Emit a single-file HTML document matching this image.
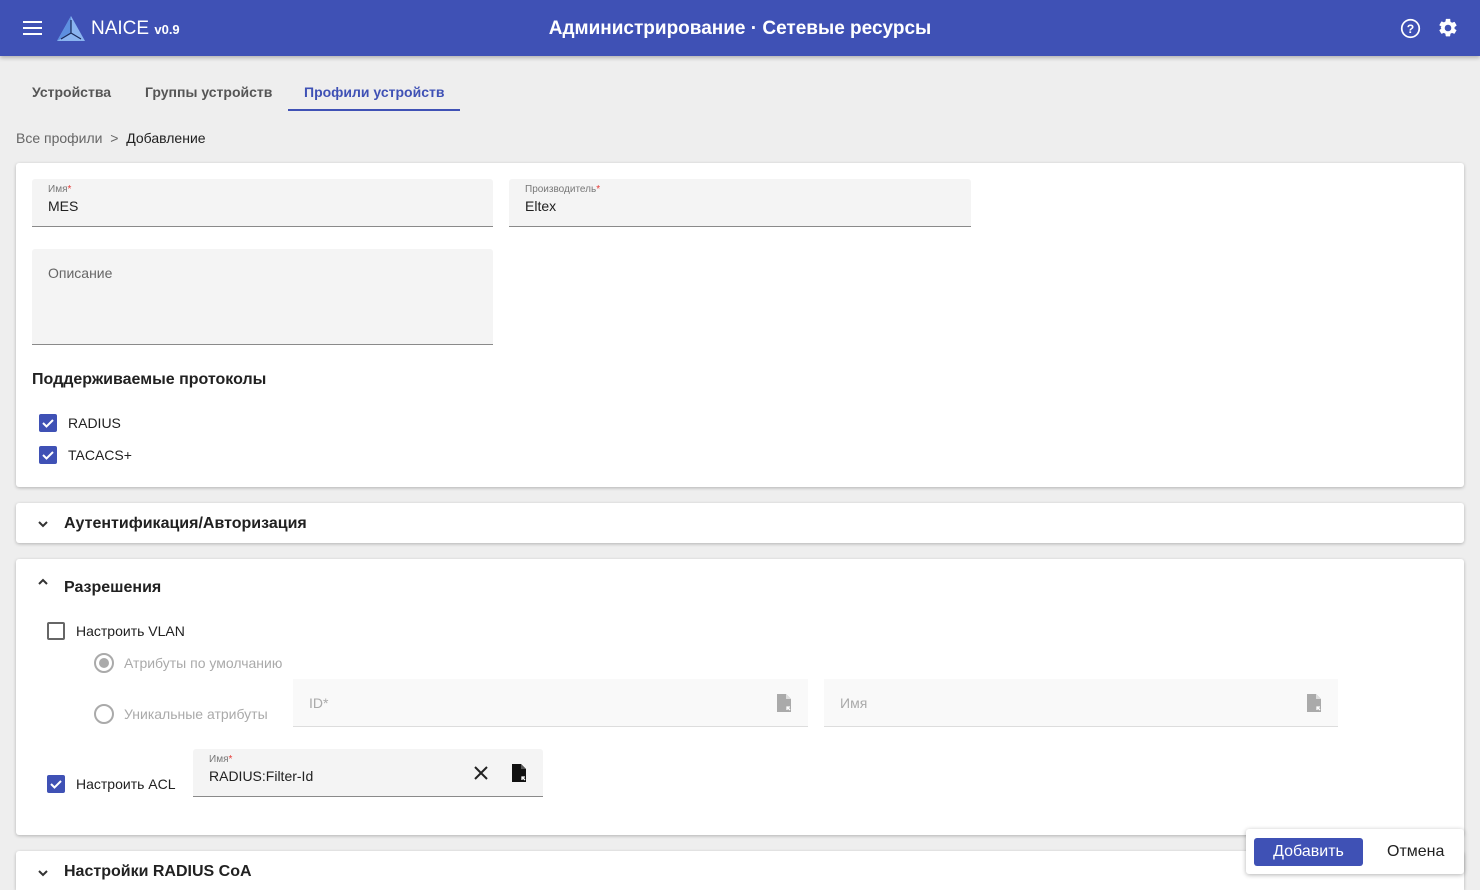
<!DOCTYPE html><html style="overflow:hidden;height:890px"><head><meta charset="utf-8"><style>
*{box-sizing:border-box;margin:0;padding:0}
body{width:1480px;height:890px;overflow:hidden;background:#eeeeee;font-family:"Liberation Sans","DejaVu Sans",sans-serif;color:#212121;position:relative;font-size:14px}
.abs{position:absolute}
.hdr{left:0;top:0;width:1480px;height:56px;background:#3f51b5;color:#fff;box-shadow:0 2px 4px rgba(0,0,0,.25)}
.card{background:#fff;left:16px;width:1448px;box-shadow:0 1px 3px rgba(0,0,0,.25);border-radius:3px}
.fld{background:#f4f4f4;border-bottom:1px solid #8a8a8a;border-radius:3px 3px 0 0}
.lbl{font-size:10px;color:#777}
.lbl b{color:#e53935;font-weight:normal}
.cbe{width:18px;height:18px;border:2px solid #666;border-radius:2px}
.h{font-weight:bold;font-size:16px}
</style></head><body>
<div class="abs hdr">
 <div class="abs" style="left:23px;top:21px;width:19px;height:2px;background:#fff;box-shadow:0 6px 0 #fff,0 12px 0 #fff"></div>
 <svg class="abs" style="left:57px;top:15px" width="29" height="27" viewBox="0 0 29 27"><polygon points="14,1 28,26 0,26" fill="#8ab4f0"/><polygon points="14,1 14,18 0,26" fill="#5d8fe0"/><path d="M14 5 L14 18 L4 24 M14 18 L24 24" stroke="#1a2a5a" stroke-width="1.2" fill="none"/></svg>
 <div class="abs" style="left:91px;top:18px;font-size:19px">NAICE <span style="font-size:13px;font-weight:bold">v0.9</span></div>
 <div class="abs" style="left:0;width:1480px;top:18px;text-align:center;font-size:19px;font-weight:bold">Администрирование · Сетевые ресурсы</div>
 <svg class="abs" style="left:1400px;top:18px" width="21" height="21" viewBox="0 0 24 24"><circle cx="12" cy="12" r="10" stroke="#fff" stroke-width="2" fill="none"/><text x="12" y="17" fill="#fff" font-size="14" font-weight="bold" text-anchor="middle" font-family="Liberation Sans">?</text></svg>
 <svg class="abs" style="left:1437px;top:17px" width="22" height="22" viewBox="0 0 24 24"><path fill="#fff" d="M19.14 12.94c.04-.3.06-.61.06-.94s-.02-.64-.07-.94l2.03-1.58a.49.49 0 0 0 .12-.61l-1.920-3.32a.49.49 0 0 0-.59-.22l-2.39.96c-.5-.38-1.030-.7-1.62-.94l-.36-2.54A.48.48 0 0 0 13.92 2h-3.84c-.24 0-.43.17-.47.41l-.36 2.54c-.59.24-1.13.57-1.62.94l-2.39-.96a.49.49 0 0 0-.59.22L2.74 8.47c-.12.21-.8.47.12.61l2.03 1.58c-.5.3-.8.63-.8.94s.2.64.7.94l-2.03 1.58a.49.49 0 0 0-.12.61l1.92 3.32c.12.22.37.29.59.22l2.39-.96c.5.38 1.03.7 1.62.94l.36 2.54c.5.24.24.41.48.41h3.84c.24 0 .44-.17.47-.41l.36-2.54c.59-.24 1.13-.56 1.62-.94l2.39.96c.22.08.47 0 .59-.22l1.92-3.32a.48.48 0 0 0-.12-.61zM12 15.6A3.6 3.6 0 1 1 12 8.4a3.6 3.6 0 0 1 0 7.2z"/></svg>
</div>
<div class="abs" style="left:32px;top:84px;font-weight:bold;color:#555">Устройства</div>
<div class="abs" style="left:145px;top:84px;font-weight:bold;color:#555">Группы устройств</div>
<div class="abs" style="left:304px;top:84px;font-weight:bold;color:#3f51b5">Профили устройств</div>
<div class="abs" style="left:288px;top:109px;width:172px;height:2px;background:#3f51b5"></div>
<div class="abs" style="left:16px;top:130px;color:#666">Все профили &nbsp;&gt;&nbsp; <span style="color:#212121">Добавление</span></div>

<div class="abs card" style="top:163px;height:324px"></div>
<div class="abs fld" style="left:32px;top:179px;width:461px;height:48px"><div class="abs lbl" style="left:16px;top:5px">Имя<b>*</b></div><div class="abs" style="left:16px;top:19px">MES</div></div>
<div class="abs fld" style="left:509px;top:179px;width:462px;height:48px"><div class="abs lbl" style="left:16px;top:5px">Производитель<b>*</b></div><div class="abs" style="left:16px;top:19px">Eltex</div></div>
<div class="abs fld" style="left:32px;top:249px;width:461px;height:96px"><div class="abs" style="left:16px;top:16px;color:#666">Описание</div></div>
<div class="abs h" style="left:32px;top:371px">Поддерживаемые протоколы</div>
<svg class="abs" style="left:39px;top:414px" width="18" height="18"><rect width="18" height="18" rx="2" fill="#3f51b5"/><path d="M4 9l3.5 3.5L14 6" stroke="#fff" stroke-width="2" fill="none"/></svg>
<div class="abs" style="left:68px;top:415px">RADIUS</div>
<svg class="abs" style="left:39px;top:446px" width="18" height="18"><rect width="18" height="18" rx="2" fill="#3f51b5"/><path d="M4 9l3.5 3.5L14 6" stroke="#fff" stroke-width="2" fill="none"/></svg>
<div class="abs" style="left:68px;top:447px">TACACS+</div>

<div class="abs card" style="top:503px;height:40px"></div>
<svg class="abs" style="left:37px;top:520px" width="12" height="10"><path d="M2 2l4 4 4-4" stroke="#333" stroke-width="2" fill="none"/></svg>
<div class="abs h" style="left:64px;top:515px">Аутентификация/Авторизация</div>

<div class="abs card" style="top:559px;height:276px"></div>
<svg class="abs" style="left:37px;top:577px" width="12" height="10"><path d="M2 7l4-4 4 4" stroke="#333" stroke-width="2" fill="none"/></svg>
<div class="abs h" style="left:64px;top:579px">Разрешения</div>
<div class="abs cbe" style="left:47px;top:622px"></div>
<div class="abs" style="left:76px;top:623px">Настроить VLAN</div>
<svg class="abs" style="left:93px;top:652px" width="22" height="22"><circle cx="11" cy="11" r="9" stroke="#aaa" stroke-width="2" fill="none"/><circle cx="11" cy="11" r="5" fill="#aaa"/></svg>
<div class="abs" style="left:124px;top:655px;color:#aaa">Атрибуты по умолчанию</div>
<svg class="abs" style="left:93px;top:703px" width="22" height="22"><circle cx="11" cy="11" r="9" stroke="#aaa" stroke-width="2" fill="none"/></svg>
<div class="abs" style="left:124px;top:706px;color:#aaa">Уникальные атрибуты</div>
<div class="abs" style="left:293px;top:679px;width:515px;height:48px;background:#f9f9f9;border-bottom:1px solid #ddd"><div class="abs" style="left:16px;top:16px;color:#aaa">ID*</div>
<svg class="abs" style="left:481px;top:14px" width="20" height="20" viewBox="0 0 20 20"><path d="M3 1h9l5 5v13H3z" fill="#aaa"/><path d="M12 1v5h5" fill="#ddd"/><path d="M16 17l-3-3m0 3v-3h3" stroke="#fff" stroke-width="1.3" fill="none"/></svg></div>
<div class="abs" style="left:824px;top:679px;width:514px;height:48px;background:#f9f9f9;border-bottom:1px solid #ddd"><div class="abs" style="left:16px;top:16px;color:#aaa">Имя</div>
<svg class="abs" style="left:480px;top:14px" width="20" height="20" viewBox="0 0 20 20"><path d="M3 1h9l5 5v13H3z" fill="#aaa"/><path d="M12 1v5h5" fill="#ddd"/><path d="M16 17l-3-3m0 3v-3h3" stroke="#fff" stroke-width="1.3" fill="none"/></svg></div>
<svg class="abs" style="left:47px;top:775px" width="18" height="18"><rect width="18" height="18" rx="2" fill="#3f51b5"/><path d="M4 9l3.5 3.5L14 6" stroke="#fff" stroke-width="2" fill="none"/></svg>
<div class="abs" style="left:76px;top:776px">Настроить ACL</div>
<div class="abs fld" style="left:193px;top:749px;width:350px;height:48px"><div class="abs lbl" style="left:16px;top:5px">Имя<b>*</b></div><div class="abs" style="left:16px;top:19px">RADIUS:Filter-Id</div>
<svg class="abs" style="left:280px;top:16px" width="16" height="16"><path d="M2 2l12 12M14 2L2 14" stroke="#222" stroke-width="2"/></svg>
<svg class="abs" style="left:316px;top:14px" width="20" height="20" viewBox="0 0 20 20"><path d="M3 1h9l5 5v13H3z" fill="#111"/><path d="M12 1v5h5" fill="#555"/><path d="M16 17l-3-3m0 3v-3h3" stroke="#fff" stroke-width="1.3" fill="none"/></svg></div>

<div class="abs card" style="top:851px;height:39px;border-radius:3px 3px 0 0"></div>
<svg class="abs" style="left:37px;top:869px" width="12" height="10"><path d="M2 2l4 4 4-4" stroke="#333" stroke-width="2" fill="none"/></svg>
<div class="abs h" style="left:64px;top:863px">Настройки RADIUS CoA</div>

<div class="abs" style="left:1246px;top:829px;width:218px;height:45px;background:#fff;box-shadow:0 1px 5px rgba(0,0,0,.3);border-radius:3px"></div>
<div class="abs" style="left:1254px;top:838px;width:109px;height:28px;background:#3f51b5;border-radius:3px;color:#fff;font-size:16px;text-align:center;line-height:28px">Добавить</div>
<div class="abs" style="left:1387px;top:843px;font-size:16px">Отмена</div>
</body></html>
